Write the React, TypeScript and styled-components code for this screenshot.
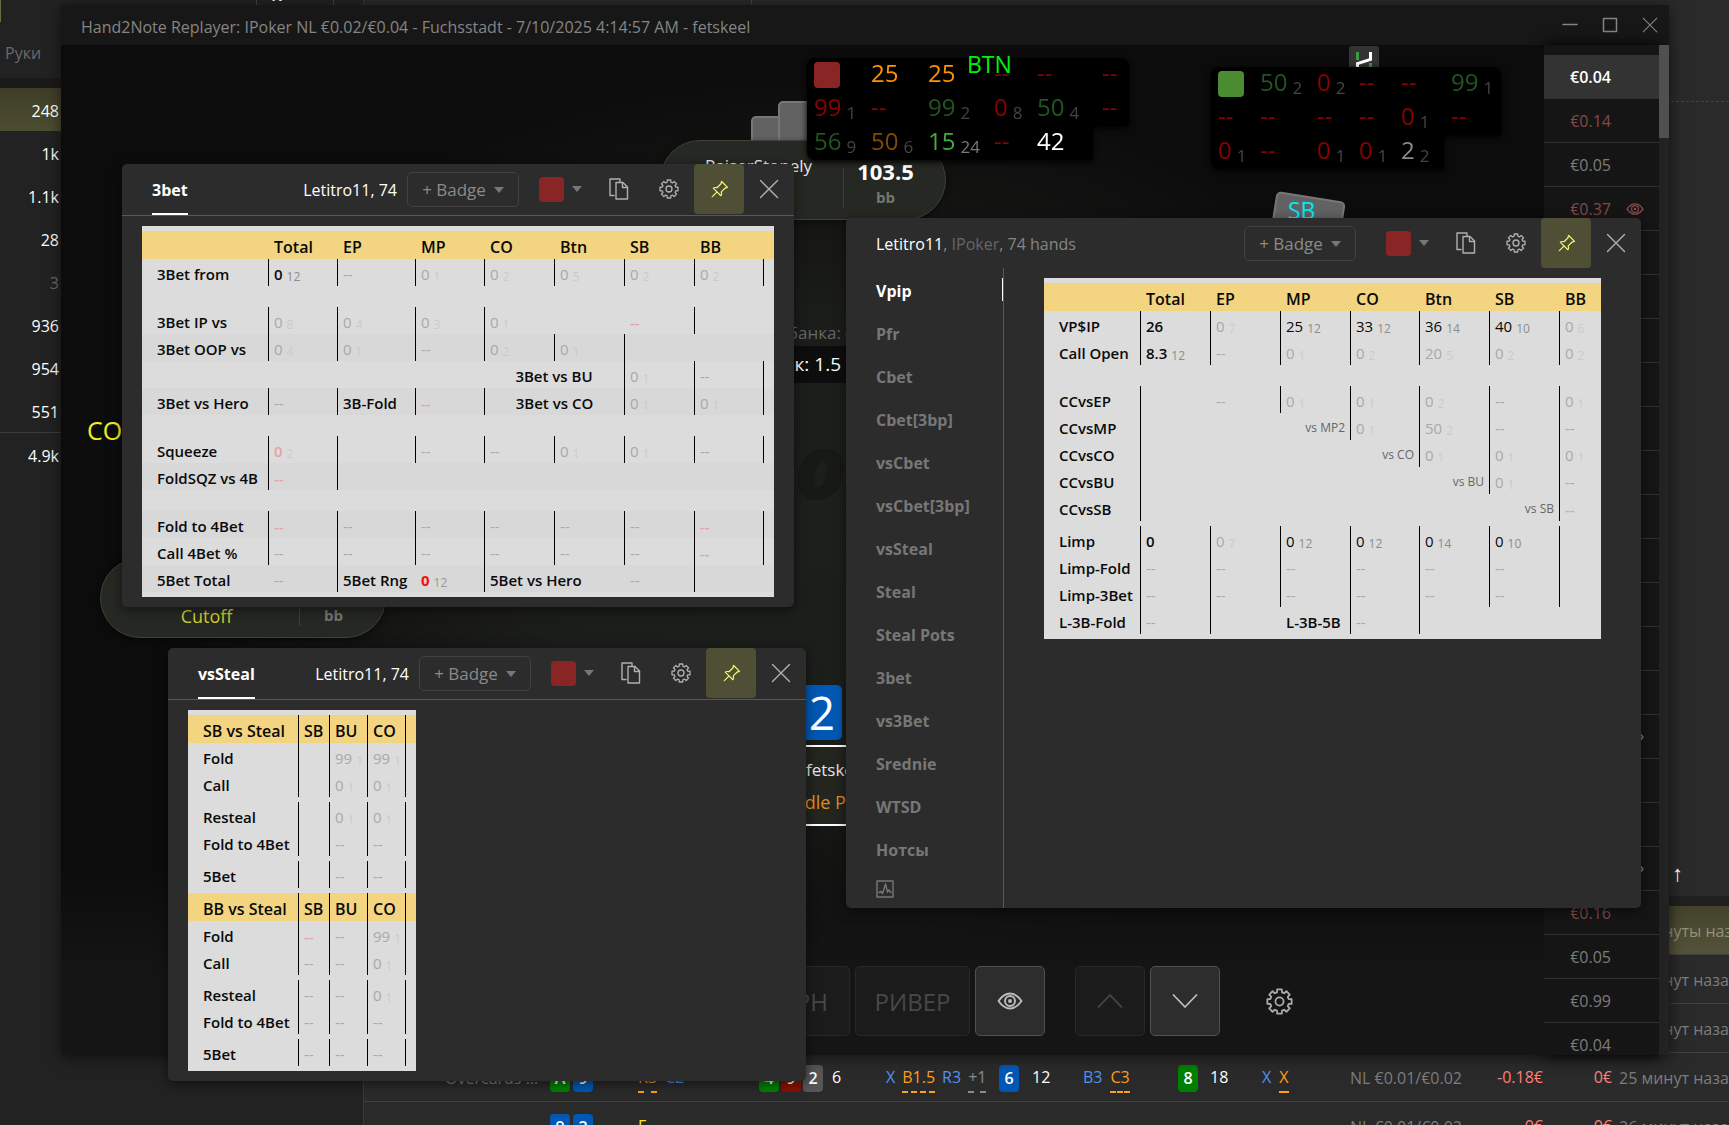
import React from "react";
import styled, { createGlobalStyle, css } from "styled-components";
import { BsPinAngle } from "react-icons/bs";

const GlobalStyle = createGlobalStyle`
  * { box-sizing: border-box; }
  body {
    margin: 0;
    background: #2a2a2a;
    color: #fff;
    font-family: "Open Sans", "Noto Sans", sans-serif;
    font-size: 16px;
    overflow: hidden;
  }
  button { font: inherit; color: inherit; background: none; border: 0; padding: 0; margin: 0; }
  ul { list-style: none; margin: 0; padding: 0; }
  table { border-spacing: 0; border-collapse: separate; table-layout: fixed; }
  td, th { padding: 0; font-weight: 400; text-align: left; }
`;

/* ---------- icons ---------- */

const gearPath = (() => {
  const teeth = 8;
  const pts: string[] = [];
  for (let i = 0; i < teeth; i++) {
    const a = (i * 2 * Math.PI) / teeth - Math.PI / 2;
    const at = (off: number, r: number) =>
      `${(12 + r * Math.cos(a + off)).toFixed(2)} ${(12 + r * Math.sin(a + off)).toFixed(2)}`;
    pts.push(at(-0.27, 8.4), at(-0.19, 11), at(0.19, 11), at(0.27, 8.4));
  }
  return `M${pts.join("L")}Z`;
})();

const Stroke = styled.svg<{ $w?: number }>`
  display: block;
  fill: none;
  stroke: currentColor;
  stroke-width: ${(p) => p.$w ?? 1.5};
  stroke-linejoin: round;
  stroke-linecap: round;
`;

const GearIcon = ({ size = 20 }: { size?: number }) => (
  <Stroke width={size} height={size} viewBox="0 0 24 24" $w={1.6}>
    <path d={gearPath} />
    <circle cx="12" cy="12" r="3.6" />
  </Stroke>
);

const CloseIcon = ({ size = 20 }: { size?: number }) => (
  <Stroke width={size} height={size} viewBox="0 0 20 20" $w={1.4}>
    <path d="M1.5 1.5l17 17M18.5 1.5l-17 17" />
  </Stroke>
);

const CopyIcon = () => (
  <Stroke width="20" height="22" viewBox="0 0 20 22" $w={1.4}>
    <path d="M5 17.5H1V1h10v3" />
    <path d="M7 4.5h7l4.500 4.500V21H7z" />
    <path d="M13.500 4.500V9.500h5" />
  </Stroke>
);

const EyeIcon = ({ size = 26 }: { size?: number }) => (
  <Stroke width={size} height={size} viewBox="0 0 26 26" $w={1.9}>
    <path d="M1.500 13C5 8 9 5.500 13 5.500S21 8 24.500 13C21 18 17 20.500 13 20.500S5 18 1.500 13z" />
    <circle cx="13" cy="13" r="5" />
    <circle cx="13" cy="13" r="1" />
  </Stroke>
);

const ChevronIcon = ({ up }: { up?: boolean }) => (
  <Stroke width="26" height="16" viewBox="0 0 26 16" $w={1.8}>
    <path d={up ? "M1.500 14L13 2l11.500 12" : "M1.500 2L13 14L24.500 2"} />
  </Stroke>
);

const GraphIcon = () => (
  <Stroke width="18" height="18" viewBox="0 0 18 18" $w={1.4}>
    <rect x="1" y="1" width="16" height="16" />
    <path d="M3 12.500l2-1 1.500 2L9.500 4l2 8 1.500-2 2 2.500" />
  </Stroke>
);

const Caret = styled.span`
  width: 0;
  height: 0;
  border: 5px solid transparent;
  border-top: 6px solid #777;
  border-bottom: 0;
`;

/* ---------- desktop and the application behind ---------- */

const Desktop = styled.div`
  position: relative;
  height: 100vh;
  min-height: 720px;
  overflow: hidden;
  background: #2a2a2a;
`;

const BackApp = styled.div`
  display: grid;
  grid-template-columns: 364px 1fr;
  height: 100%;
`;

const Sidebar = styled.aside`
  background: #222;
  border-right: 1px solid #3a3a3a;
`;

const SideHead = styled.div`
  height: 78px;
  padding: 42px 0 0 4px;
  border-left: 1px solid #5c5c3a;
  border-image: linear-gradient(#6b6b45 22px, transparent 22px) 1;
  color: #6a6a6a;
  font-size: 16px;
  line-height: 22px;
`;

const Counts = styled.ul`
  width: 61px;
  padding-top: 10px;
  background: linear-gradient(#1a1a1a 10px, transparent 10px);
`;

const Count = styled.li<{ $active?: boolean; $dim?: boolean; $top?: boolean }>`
  height: 43px;
  padding-right: 2px;
  text-align: right;
  line-height: 46px;
  color: ${(p) => (p.$dim ? "#6a6a6a" : "#fff")};
  background: ${(p) => (p.$active ? "linear-gradient(#3e3d28, #4d4d30)" : "none")};
  ${(p) => p.$top && css`border-top: 1px solid #3c3c3c;`}
`;

const Main = styled.main`
  display: flex;
  flex-direction: column;
  min-width: 0;
  overflow: hidden;
`;

const TopTabs = styled.div`
  flex: 0 0 102px;
  display: flex;
  background: #2a2a2a;
  border-bottom: 1px dashed #444;
`;

const TopTab = styled.div`
  width: 388px;
  border-right: 1px solid #444;
`;

const ChartArea = styled.div`
  flex: 0 0 794px;
  display: flex;
  align-items: flex-end;
  justify-content: flex-end;
  padding: 0 46px 11px 0;
  font-size: 22px;
  line-height: 26px;
`;

const HandTable = styled.table`
  width: 100%;
  border-top: 10px solid #202020;
`;

const HandRow = styled.tr<{ $active?: boolean }>`
  height: 49px;
  background: ${(p) => (p.$active ? "linear-gradient(#43422b, #55543a)" : "#2a2a2a")};
  td {
    padding-top: 2px;
    border-bottom: 1px solid #404040;
    white-space: nowrap;
    overflow: hidden;
    color: ${(p) => (p.$active ? "#92917a" : "#7d7d7d")};
  }
`;

const Line = styled.div<{ $gap?: number; $pad?: number; $end?: boolean }>`
  display: flex;
  align-items: center;
  gap: ${(p) => p.$gap ?? 8}px;
  padding-left: ${(p) => p.$pad ?? 0}px;
  justify-content: ${(p) => (p.$end ? "flex-end" : "flex-start")};
`;

const ink = { blue: "#4f93f5", orange: "#ff9d1e", grey: "#8a8a8a", white: "#fff", red: "#ff8076", yellow: "#f4e628" };

const Act = styled.span<{ $c: keyof typeof ink; $u?: boolean }>`
  height: 30px;
  line-height: 28px;
  color: ${(p) => ink[p.$c]};
  border-bottom: ${(p) => (p.$u ? "2px dashed" : "0")};
`;

const suit = { green: "#008000", blue: "#0058b4", red: "#8b1200", grey: "#565656" };

const MiniCard = styled.span<{ $s: keyof typeof suit }>`
  width: 20px;
  height: 27px;
  border-radius: 4px;
  background: ${(p) => suit[p.$s]};
  color: #fff;
  font-weight: 600;
  line-height: 27px;
  text-align: center;
`;

const ColumnLetter = styled.div`
  position: absolute;
  left: 271px;
  top: -16px;
  font-size: 17px;
  font-weight: 600;
  line-height: 22px;
`;

const TabRules = styled.div`
  position: absolute;
  left: 256px;
  top: 0;
  width: 78px;
  height: 5px;
  border: solid #444;
  border-width: 0 1px;
`;

const handCols = [186, 88, 121, 127, 113, 84, 95, 84, 88, 0, 76, 69, 117];

function HandList() {
  return (
    <HandTable>
      <colgroup>
        {handCols.map((w, i) => (
          <col key={i} width={w || undefined} />
        ))}
      </colgroup>
      <tbody>
        {["22 минуты назад", "23 минут назад", "24 минут назад"].map((t, i) => (
          <HandRow key={t} $active={i === 0}>
            <td colSpan={12} />
            <td><Line $pad={7}>{t}</Line></td>
          </HandRow>
        ))}
        <HandRow>
          <td><Line $pad={81}>Overcards ...</Line></td>
          <td><Line $gap={3}><MiniCard $s="green">A</MiniCard><MiniCard $s="blue">9</MiniCard></Line></td>
          <td><Line><Act $c="orange" $u>R3</Act><Act $c="blue">C2</Act></Line></td>
          <td>
            <Line $gap={2}>
              <MiniCard $s="green">4</MiniCard><MiniCard $s="red">9</MiniCard><MiniCard $s="grey">2</MiniCard>
              <Line $pad={7}><Act $c="white">6</Act></Line>
            </Line>
          </td>
          <td>
            <Line $gap={7}>
              <Act $c="blue">X</Act><Act $c="orange" $u>B1.5</Act><Act $c="blue">R3</Act><Act $c="grey" $u>+1</Act>
            </Line>
          </td>
          <td><Line $gap={13}><MiniCard $s="blue">6</MiniCard><Act $c="white">12</Act></Line></td>
          <td><Line><Act $c="blue">B3</Act><Act $c="orange" $u>C3</Act></Line></td>
          <td><Line $gap={12}><MiniCard $s="green">8</MiniCard><Act $c="white">18</Act></Line></td>
          <td><Line><Act $c="blue">X</Act><Act $c="orange" $u>X</Act></Line></td>
          <td>NL €0.01/€0.02</td>
          <td><Line $end><Act $c="red">-0.18€</Act></Line></td>
          <td><Line $end><Act $c="red">0€</Act></Line></td>
          <td><Line $pad={7}>25 минут назад</Line></td>
        </HandRow>
        <HandRow>
          <td />
          <td><Line $gap={3}><MiniCard $s="blue">9</MiniCard><MiniCard $s="blue">2</MiniCard></Line></td>
          <td><Line><Act $c="yellow">F</Act></Line></td>
          <td colSpan={6} />
          <td>NL €0.01/€0.02</td>
          <td><Line $end><Act $c="red">0€</Act></Line></td>
          <td><Line $end><Act $c="red">0€</Act></Line></td>
          <td><Line $pad={7}>26 минут назад</Line></td>
        </HandRow>
      </tbody>
    </HandTable>
  );
}

/* ---------- replayer window ---------- */

const Replayer = styled.section`
  position: absolute;
  left: 61px;
  right: 60px;
  top: 5px;
  bottom: 70px;
  display: flex;
  flex-direction: column;
  background: #0c0c0c;
  box-shadow: 0 2px 14px rgba(0, 0, 0, 0.55);
`;

const TitleBar = styled.header`
  flex: 0 0 40px;
  display: flex;
  align-items: center;
  justify-content: space-between;
  padding: 0 11px 0 20px;
  background: #171717;
  color: #858585;
`;

const Title = styled.span`
  padding-top: 3px;
`;

const WindowButtons = styled.div`
  display: flex;
  gap: 24px;
  button { width: 16px; height: 16px; display: grid; place-items: center; }
`;

const ReplayBody = styled.div`
  flex: 1;
  display: flex;
  min-height: 0;
`;

const Felt = styled.div`
  position: relative;
  flex: 1;
  display: flex;
  flex-direction: column;
  justify-content: flex-end;
  overflow: hidden;
  background:
    linear-gradient(transparent 820px, #151515 930px),
    radial-gradient(640px 460px at 50% 48%, #1c1f1b 0%, #1b1d1a 45%, #131412 75%, #0c0c0c 100%);
`;

const Spot = styled.div<{ $x: number; $y: number }>`
  position: absolute;
  left: ${(p) => p.$x}px;
  top: ${(p) => p.$y}px;
`;

const SeatLabel = styled(Spot)<{ $c: string; $size?: number }>`
  color: ${(p) => p.$c};
  font-size: ${(p) => p.$size ?? 23}px;
  line-height: 30px;
  white-space: nowrap;
`;

const Seat = styled(Spot)<{ $name: number }>`
  display: grid;
  grid-template-columns: ${(p) => p.$name}px 1fr;
  width: 286px;
  height: 80px;
  padding-top: 10px;
  border: 1px solid #3d423a;
  border-radius: 40px;
  background: #262823;
  text-align: center;
  box-shadow: 0 2px 6px rgba(0, 0, 0, 0.5);
`;

const SeatName = styled.div`
  display: grid;
  grid-template-rows: 30px 26px;
  gap: 4px;
  padding-left: 13px;
  line-height: 30px;
  color: #e8e8e8;
  font-size: 17px;
  em { grid-row: 2; font-style: normal; color: #cfcf2c; font-size: 18px; line-height: 26px; }
`;

const SeatStack = styled.div`
  margin: 17px 0 24px;
  border-left: 1px solid #3d3f3a;
  padding-right: 18px;
  strong { display: block; height: 30px; margin-top: -12px; font-size: 22px; line-height: 30px; }
  small { display: block; font-size: 15px; font-weight: 700; line-height: 22px; color: #75766f; }
`;

const BackCard = styled(Spot)<{ $tilt?: boolean }>`
  width: ${(p) => (p.$tilt ? 70 : 52)}px;
  height: 80px;
  border: 2px solid #777;
  border-radius: 5px;
  background: #626262;
  ${(p) => p.$tilt && css`transform: rotate(9deg);`}
`;

const Watermark = styled(Spot)`
  font-size: 88px;
  line-height: 100px;
  font-weight: 800;
  font-style: italic;
  color: #171916;
`;

const PotSize = styled(Spot)`
  display: grid;
  justify-items: end;
  width: 200px;
  color: #666;
  font-size: 17px;
  line-height: 24px;
  strong {
    margin-top: 1px;
    padding: 0 14px 0 60px;
    background: #0d0d0d;
    color: #fff;
    font-size: 19px;
    font-weight: 400;
    line-height: 37px;
  }
`;

const HeroCard = styled(Spot)`
  width: 50px;
  height: 55px;
  padding-right: 7px;
  border-radius: 5px;
  background: #0058b4;
  font-size: 46px;
  line-height: 54px;
  text-align: right;
`;

const HeroBox = styled(Spot)`
  width: 240px;
  padding: 7px 0 6px 45px;
  border: solid #fff;
  border-width: 2px 0;
  background: #23251f;
  color: #e4e4e4;
  font-size: 17px;
  line-height: 32px;
  em { display: block; margin-left: -33px; font-style: normal; font-size: 18px; color: #e08d1c; }
`;

const Brand = styled(Spot)`
  width: 30px;
  height: 24px;
  border-radius: 3px;
  background: #333;
`;

const hudInk: Record<string, string> = {
  r: "#8b0000", g: "#22551f", G: "#3fae3c", o: "#ff9100", O: "#7f4a05", w: "#fff", d: "#8a8a8a",
};

const Hud = styled(Spot)`
  display: flex;
  flex-direction: column;
  align-items: flex-start;
  filter: drop-shadow(0 2px 3px #000);
`;

const HudRow = styled.div<{ $cols: string; $w: number }>`
  display: grid;
  grid-template-columns: ${(p) => p.$cols};
  width: ${(p) => p.$w}px;
  height: 34px;
  padding-left: 7px;
  background: #000;
  font-size: 24px;
  line-height: 30px;
  &:first-child { border-radius: 8px 8px 0 0; }
  &:last-child { border-radius: 0 0 0 8px; }
`;

const HudStat = styled.span<{ $c: string }>`
  color: ${(p) => hudInk[p.$c]};
  white-space: nowrap;
  small {
    margin-left: 5px;
    font-size: 17px;
    line-height: 1;
    vertical-align: -3px;
    color: ${(p) => (p.$c === "G" ? "#777" : "#444")};
  }
`;

const HudSwatch = styled.span<{ $c: string }>`
  width: 26px;
  height: 26px;
  margin-top: 4px;
  border-radius: 4px;
  background: ${(p) => p.$c};
`;

type Stat = [string, string, string?];

function HudPanel(p: { x: number; y: number; cols: string; widths: number[]; swatch: string; rows: Stat[][] }) {
  return (
    <Hud $x={p.x} $y={p.y}>
      {p.rows.map((row, i) => (
        <HudRow key={i} $cols={p.cols} $w={p.widths[i]}>
          {i === 0 && <HudSwatch $c={p.swatch} />}
          {row.map(([c, v, n], j) => (
            <HudStat key={j} $c={c}>{v}{n && <small>{n}</small>}</HudStat>
          ))}
        </HudRow>
      ))}
    </Hud>
  );
}

const no: Stat = ["r", "--"];

const Controls = styled.div`
  display: flex;
  align-items: center;
  gap: 5px;
  padding: 0 0 19px 686px;
  color: #aaa;
`;

const Control = styled.button<{ $lit?: boolean; $w: number; $push?: boolean }>`
  display: grid;
  place-items: center;
  width: ${(p) => p.$w}px;
  height: 70px;
  margin-left: ${(p) => (p.$push ? 25 : 0)}px;
  border: 1px solid ${(p) => (p.$lit ? "#505050" : "#282828")};
  border-radius: 5px;
  background: ${(p) => (p.$lit ? "#2d2d2d" : "#1b1b1b")};
  color: ${(p) => (p.$lit ? "#bdbdbd" : "#484848")};
  font-size: 24px;
`;

const GearControl = styled.button`
  margin-left: 41px;
`;

const Prices = styled.ul`
  flex: 0 0 115px;
  padding-top: 10px;
  overflow: hidden;
  background: #151515;
  box-shadow: 0 0 14px #000;
`;

const Price = styled.li<{ $tone: "lit" | "red" | "grey" }>`
  display: grid;
  grid-template-columns: 67px 1fr;
  align-items: center;
  gap: 15px;
  height: 44px;
  padding-top: 1px;
  border-bottom: 1px solid #303030;
  text-align: right;
  background: ${(p) => (p.$tone === "lit" ? "#333" : "none")};
  font-weight: ${(p) => (p.$tone === "lit" ? 600 : 400)};
  color: ${(p) => ({ lit: "#fff", red: "#854848", grey: "#7c7c7c" })[p.$tone]};
`;

const Track = styled.div`
  flex: 0 0 10px;
  background: #222;
  &::before { content: ""; display: block; height: 93px; background: #505050; }
`;

const prices: ["lit" | "red" | "grey", string][] = [
  ["lit", "€0.04"], ["red", "€0.14"], ["grey", "€0.05"], ["red", "€0.37"],
  ...Array.from({ length: 15 }, (): ["grey", string] => ["grey", ""]),
  ["red", "€0.16"], ["grey", "€0.05"], ["grey", "€0.99"], ["grey", "€0.04"],
];

const priceEye = new Set([3, 15, 18]);

/* ---------- popups ---------- */

const Popup = styled.section<{ $x: number; $y: number; $w: number; $h: number }>`
  position: absolute;
  left: ${(p) => p.$x}px;
  top: ${(p) => p.$y}px;
  width: ${(p) => p.$w}px;
  min-height: ${(p) => p.$h}px;
  display: flex;
  flex-direction: column;
  overflow: hidden;
  border-radius: 5px;
  background: #2c2c2c;
  box-shadow: 0 3px 12px rgba(0, 0, 0, 0.5);
`;

const PopupHead = styled.header<{ $line?: boolean }>`
  display: flex;
  height: ${(p) => (p.$line ? 52 : 50)}px;
  padding-left: 30px;
  border-bottom: ${(p) => (p.$line ? "1px solid #585858" : "0")};
`;

const Tab = styled.button`
  padding-top: 3px;
  border-bottom: 2px solid #fff;
  font-weight: 700;
`;

const Player = styled.div<{ $start?: boolean }>`
  flex: 1;
  padding-right: 10px;
  line-height: 53px;
  text-align: ${(p) => (p.$start ? "left" : "right")};
  color: ${(p) => (p.$start ? "#858585" : "#fff")};
  b { font-weight: 400; color: #fff; }
  i { font-style: normal; color: #666; }
`;

const BadgeButton = styled.button<{ $apart?: boolean }>`
  display: flex;
  align-items: center;
  justify-content: center;
  gap: 8px;
  width: 112px;
  height: 35px;
  margin: 8px ${(p) => (p.$apart ? 30 : 20)}px 0 0;
  border: 1px solid #414141;
  border-radius: 5px;
  color: #8a8a8a;
  font-size: 17px;
`;

const ColorButton = styled.button`
  display: flex;
  align-items: center;
  gap: 8px;
  height: 50px;
  margin-right: 12px;
  &::before { content: ""; width: 25px; height: 25px; border-radius: 4px; background: #8a2526; }
`;

const ToolButton = styled.button<{ $on?: boolean }>`
  display: grid;
  place-items: center;
  width: 50px;
  height: 50px;
  border-radius: 4px;
  background: ${(p) => (p.$on ? "#4f4f35" : "none")};
  color: ${(p) => (p.$on ? "#f6f66e" : "#b0b0b0")};
`;

const Tools = ({ apart }: { apart?: boolean }) => (
  <>
    <BadgeButton $apart={apart}>+ Badge <Caret /></BadgeButton>
    <ColorButton aria-label="Color"><Caret /></ColorButton>
    <ToolButton aria-label="Copy"><CopyIcon /></ToolButton>
    <ToolButton aria-label="Settings"><GearIcon /></ToolButton>
    <ToolButton aria-label="Pin" $on><BsPinAngle size={19} /></ToolButton>
    <ToolButton aria-label="Close"><CloseIcon /></ToolButton>
  </>
);

const Body = styled.div`
  padding: 10px 20px;
`;

const SideBody = styled.div`
  flex: 1;
  display: grid;
  grid-template-columns: 158px 1fr;
`;

const Nav = styled.nav`
  display: flex;
  flex-direction: column;
  padding-top: 1px;
  border-right: 1px solid #585858;
`;

const NavItem = styled.button<{ $on?: boolean }>`
  position: relative;
  height: 43px;
  padding-left: 30px;
  text-align: left;
  font-weight: 700;
  color: ${(p) => (p.$on ? "#fff" : "#777")};
  &:last-child { height: 36px; }
  ${(p) => p.$on && css`
    &::after { content: ""; position: absolute; right: 0; top: 9px; width: 1px; height: 23px; background: #fff; }
  `}
`;

const SideContent = styled.div`
  padding: 10px 40px;
`;

/* ---------- stat tables ---------- */

const Stats = styled.table`
  width: 100%;
  border: solid #dcdcdc;
  border-width: 5px 0;
  background: #dcdcdc;
  color: #0a0a0a;
`;

const StatHead = styled.tr`
  height: 28px;
  background: #f3d480;
`;

const StatRow = styled.tr<{ $shade?: boolean }>`
  height: 27px;
  background: ${(p) => (p.$shade ? "#d8d8d8" : "none")};
`;

const Gap = styled.tr<{ $h: number }>`
  height: ${(p) => p.$h}px;
`;

const tones: Record<string, [string, string, number]> = {
  f: ["#a9a9a9", "#cbcbcb", 400],
  r: ["#e5a3a3", "#cbcbcb", 600],
  R: ["#f01212", "#999", 700],
  b: ["#0a0a0a", "#8c8c8c", 600],
  k: ["#0a0a0a", "#8c8c8c", 400],
  n: ["#666", "#666", 400],
  l: ["#0a0a0a", "#8c8c8c", 600],
};

const cellBase = css<{ $line?: boolean; $tone?: string; $align?: string; $label?: boolean }>`
  padding: 3px 0 0 ${(p) => (p.$label ? 15 : p.$line ? 5 : 6)}px;
  ${(p) => p.$align === "right" && "padding: 3px 5px 0 0;"}
  ${(p) => p.$align === "center" && "padding-left: 0;"}
  border-left: ${(p) => (p.$line ? "1px solid #000" : "0")};
  text-align: ${(p) => p.$align ?? "left"};
  white-space: nowrap;
  line-height: 20px;
  font-size: ${(p) => (p.$tone === "n" ? 12 : 15)}px;
  font-weight: ${(p) => tones[p.$tone ?? "l"][2]};
  color: ${(p) => tones[p.$tone ?? "l"][0]};
  small {
    margin-left: 4px;
    font-size: 12px;
    font-weight: 400;
    vertical-align: -1px;
    line-height: 1;
    color: ${(p) => tones[p.$tone ?? "l"][1]};
  }
`;

const Cell = styled.td`${cellBase}`;
const RowName = styled.th`${cellBase}`;

const HeadCell = styled.th<{ $line?: boolean; $label?: boolean }>`
  padding: 3px 0 0 ${(p) => (p.$label ? 15 : p.$line ? 5 : 6)}px;
  border-left: ${(p) => (p.$line ? "1px solid #000" : "0")};
  font-size: 16px;
  font-weight: 600;
  line-height: 22px;
  white-space: nowrap;
`;

type C = { t?: string; n?: string; tone?: string; line: boolean; span: number; align?: string };
type Row = { head?: string[]; ruled?: boolean; gap?: number; name?: string; shade?: boolean; cells?: C[] };

/* "|" starts a ruled cell, "." one without a rule; then tone:value:count:span:align */
const cells = (src: string): C[] =>
  src.split(/ +/).map((s) => {
    const [tone, t, n, span, align] = s.slice(1).split(":");
    return {
      line: s[0] === "|",
      tone: tone || "f",
      t: (t ?? "").replace(/_/g, " "),
      n: n || undefined,
      span: Number(span || 1),
      align: align === "r" ? "right" : align === "c" ? "center" : undefined,
    };
  });

const row = (name: string, src: string, shade = false): Row => ({ name, shade, cells: cells(src) });

function StatTable({ cols, rows }: { cols: number[]; rows: Row[] }) {
  return (
    <Stats>
      <colgroup>
        {cols.map((w, i) => (
          <col key={i} width={w || undefined} />
        ))}
      </colgroup>
      <tbody>
        {rows.map((r, i) => {
          if (r.gap) return <Gap key={i} $h={r.gap}><td colSpan={cols.length} /></Gap>;
          if (r.head)
            return (
              <StatHead key={i}>
                {r.head.map((h, j) => (
                  <HeadCell key={j} scope="col" $label={j === 0} $line={j > 0 && r.ruled}>{h}</HeadCell>
                ))}
              </StatHead>
            );
          return (
            <StatRow key={i} $shade={r.shade}>
              <RowName scope="row" $label>{r.name}</RowName>
              {r.cells!.map((c, j) => (
                <Cell key={j} colSpan={c.span} $line={c.line} $tone={c.tone} $align={c.align}>
                  {c.t}{c.n && <small>{c.n}</small>}
                </Cell>
              ))}
            </StatRow>
          );
        })}
      </tbody>
    </Stats>
  );
}

const threeBet: Row[] = [
  { head: ["", "Total", "EP", "MP", "CO", "Btn", "SB", "BB", ""] },
  row("3Bet from", "|b:0:12 |f:-- |f:0:1 |f:0:2 |f:0:5 |f:0:2 |f:0:2 |"),
  { gap: 21 },
  row("3Bet IP vs", "|f:0:8 |f:0:4 |f:0:3 |f:0:1 . .r:-- | ."),
  row("3Bet OOP vs", "|f:0:4 |f:0:1 |f:-- |f:0:2 |f:0:1 |:::3", true),
  row("", ".:::3 .l:3Bet_vs_BU::2:c |f:0:1 |f:-- |"),
  row("3Bet vs Hero", "|f:-- |l:3B-Fold |r:-- |l:3Bet_vs_CO::2:c |f:0:1 |f:0:1 |", true),
  { gap: 21 },
  row("Squeeze", "|r:0:2 | |f:-- |f:-- |f:0:1 |f:0:1 |f:-- |"),
  row("FoldSQZ vs 4B", "|r:-- |:::7", true),
  { gap: 21 },
  row("Fold to 4Bet", "|r:-- |f:-- |f:-- |f:-- |f:-- |f:-- |r:-- |", true),
  row("Call 4Bet %", "|f:-- |f:-- |f:-- |f:-- |f:-- |f:-- |r:-- |"),
  row("5Bet Total", ".f:-- |l:5Bet_Rng .R:0:12 |l:5Bet_vs_Hero::2 .f:-- | .", true),
];

const vpip: Row[] = [
  { head: ["", "Total", "EP", "MP", "CO", "Btn", "SB", "BB"] },
  row("VP$IP", "|b:26 |f:0:7 |k:25:12 |k:33:12 |k:36:14 |k:40:10 |f:0:6"),
  row("Call Open", "|b:8.3:12 |f:-- |f:0:1 |f:0:2 |f:20:5 |f:0:2 |f:0:2"),
  { gap: 21 },
  row("CCvsEP", "| .f:-- |f:0:1 |f:0:1 |f:0:2 |f:-- |f:0:1"),
  row("CCvsMP", "| .n:vs_MP2::2:r |f:0:1 |f:50:2 |f:-- |f:--"),
  row("CCvsCO", "| .n:vs_CO::3:r |f:0:1 |f:0:1 |f:0:1"),
  row("CCvsBU", "| .n:vs_BU::4:r |f:0:1 |f:--"),
  row("CCvsSB", "| .n:vs_SB::5:r |r:--"),
  { gap: 5 },
  row("Limp", "|b:0 |f:0:7 |k:0:12 |k:0:12 |k:0:14 |k:0:10 |"),
  row("Limp-Fold", "|f:-- |f:-- |f:-- |f:-- |f:-- |f:-- |"),
  row("Limp-3Bet", "|f:-- |f:-- |f:-- |f:-- |f:-- |f:-- |"),
  row("L-3B-Fold", "|f:-- | .l:L-3B-5B |f:-- | . ."),
];

const vsSteal: Row[] = [
  { head: ["SB vs Steal", "SB", "BU", "CO", ""], ruled: true },
  row("Fold", "| |f:99:1 |f:99:1 |"),
  row("Call", "| |f:0:1 |f:0:1 |"),
  { gap: 5 },
  row("Resteal", "| |f:0:1 |f:0:1 |"),
  row("Fold to 4Bet", "| |f:-- |f:-- |"),
  { gap: 5 },
  row("5Bet", "| |f:-- |f:-- |"),
  { gap: 5 },
  { head: ["BB vs Steal", "SB", "BU", "CO", ""], ruled: true },
  row("Fold", "|r:-- |f:-- |f:99:1 |"),
  row("Call", "|f:-- |f:-- |f:0:1 |"),
  { gap: 5 },
  row("Resteal", "|f:-- |f:-- |f:0:1 |"),
  row("Fold to 4Bet", "|f:-- |f:-- |f:-- |"),
  { gap: 5 },
  row("5Bet", "|f:-- |f:-- |f:-- |"),
];

const StealBox = styled.div`
  width: 228px;
`;

const navItems = [
  "Vpip", "Pfr", "Cbet", "Cbet[3bp]", "vsCbet", "vsCbet[3bp]", "vsSteal",
  "Steal", "Steal Pots", "3bet", "vs3Bet", "Srednie", "WTSD", "Нотсы",
];

/* ---------- page ---------- */

export default function App() {
  return (
    <Desktop>
      <GlobalStyle />
      <BackApp>
        <Sidebar>
          <SideHead>Руки</SideHead>
          <Counts>
            <Count $active>248</Count>
            <Count>1k</Count>
            <Count>1.1k</Count>
            <Count>28</Count>
            <Count $dim>3</Count>
            <Count>936</Count>
            <Count>954</Count>
            <Count>551</Count>
            <Count $top>4.9k</Count>
          </Counts>
        </Sidebar>
        <Main>
          <TopTabs><TopTab /></TopTabs>
          <ChartArea>↑</ChartArea>
          <HandList />
        </Main>
      </BackApp>
      <TabRules />
      <ColumnLetter>К</ColumnLetter>

      <Replayer>
        <TitleBar>
          <Title>Hand2Note Replayer: IPoker NL €0.02/€0.04 - Fuchsstadt - 7/10/2025 4:14:57 AM - fetskeel</Title>
          <WindowButtons>
            <button aria-label="Minimize"><Stroke width="16" height="16" viewBox="0 0 16 16"><path d="M1 7.500h14" /></Stroke></button>
            <button aria-label="Maximize"><Stroke width="16" height="16" viewBox="0 0 16 16"><path d="M1.500 1.500h13v13h-13z" /></Stroke></button>
            <button aria-label="Close"><CloseIcon size={16} /></button>
          </WindowButtons>
        </TitleBar>
        <ReplayBody>
          <Felt>
            <Watermark $x={733} $y={370}>o</Watermark>
            <BackCard $x={690} $y={71} />
            <BackCard $x={717} $y={56} />
            <BackCard $x={1209} $y={151} $tilt />
            <Seat $x={599} $y={95} $name={182}>
              <SeatName>RaiserStonely</SeatName>
              <SeatStack><strong>103.5</strong><small>bb</small></SeatStack>
            </Seat>
            <Seat $x={39} $y={513} $name={198}>
              <SeatName><em>Cutoff</em></SeatName>
              <SeatStack><strong /><small>bb</small></SeatStack>
            </Seat>
            <PotSize $x={594} $y={276}>
              <span>Размер банка: 4</span>
              <strong>Банк: 1.5</strong>
            </PotSize>
            <HeroCard $x={731} $y={640}>2</HeroCard>
            <HeroBox $x={700} $y={700}>fetskeel<em>Middle Position</em></HeroBox>
            <Brand $x={1288} $y={1}>
              <svg width="30" height="24" viewBox="0 0 30 24" fill="none" strokeWidth="3">
                <path d="M8.500 6v8M21.500 17v7" stroke="#3f9a45" />
                <path d="M21.500 6v7.500L8.500 17.500V24" stroke="#fff" />
              </svg>
            </Brand>
            <HudPanel
              x={746} y={13} cols="57px 57px 66px 43px 65px 1fr" widths={[322, 322, 286]} swatch="#8a2526"
              rows={[
                [["o", "25"], ["o", "25"], no, no, no],
                [["r", "99", "1"], no, ["g", "99", "2"], ["r", "0", "8"], ["g", "50", "4"], no],
                [["g", "56", "9"], ["O", "50", "6"], ["G", "15", "24"], no, ["w", "42"]],
              ]}
            />
            <HudPanel
              x={1150} y={22} cols="42px 57px 42px 42px 50px 1fr" widths={[290, 290, 233]} swatch="#4b8c32"
              rows={[
                [["g", "50", "2"], ["r", "0", "2"], no, no, ["g", "99", "1"]],
                [no, no, no, no, ["r", "0", "1"], no],
                [["r", "0", "1"], no, ["r", "0", "1"], ["r", "0", "1"], ["d", "2", "2"]],
              ]}
            />
            <SeatLabel $x={906} $y={4} $c="#00f010">BTN</SeatLabel>
            <SeatLabel $x={1227} $y={150} $c="#00eaf5">SB</SeatLabel>
            <SeatLabel $x={26} $y={370} $c="#eeee22" $size={25}>CO</SeatLabel>
            <Controls>
              <Control $w={103}>ТЕРН</Control>
              <Control $w={115}>РИВЕР</Control>
              <Control $w={70} $lit aria-label="Show cards"><EyeIcon /></Control>
              <Control $w={70} $push aria-label="Previous hand"><ChevronIcon up /></Control>
              <Control $w={70} $lit aria-label="Next hand"><ChevronIcon /></Control>
              <GearControl aria-label="Replayer settings"><GearIcon size={27} /></GearControl>
            </Controls>
          </Felt>
          <Prices>
            {prices.map(([tone, v], i) => (
              <Price key={i} $tone={tone}>
                <span>{v}</span>
                {priceEye.has(i) && <EyeIcon size={18} />}
              </Price>
            ))}
          </Prices>
          <Track />
        </ReplayBody>
      </Replayer>

      <Popup $x={122} $y={164} $w={672} $h={443}>
        <PopupHead $line>
          <Tab>3bet</Tab>
          <Player>Letitro11, 74</Player>
          <Tools />
        </PopupHead>
        <Body>
          <StatTable cols={[126, 69, 78, 69, 70, 70, 70, 69, 0]} rows={threeBet} />
        </Body>
      </Popup>

      <Popup $x={168} $y={648} $w={638} $h={433}>
        <PopupHead $line>
          <Tab>vsSteal</Tab>
          <Player>Letitro11, 74</Player>
          <Tools />
        </PopupHead>
        <Body>
          <StealBox>
            <StatTable cols={[110, 31, 38, 38, 0]} rows={vsSteal} />
          </StealBox>
        </Body>
      </Popup>

      <Popup $x={846} $y={218} $w={795} $h={690}>
        <PopupHead>
          <Player $start><b>Letitro11</b>, <i>IPoker</i>, 74 hands</Player>
          <Tools apart />
        </PopupHead>
        <SideBody>
          <Nav>
            {navItems.map((n, i) => (
              <NavItem key={n} $on={i === 0}>{n}</NavItem>
            ))}
            <NavItem aria-label="Graph"><GraphIcon /></NavItem>
          </Nav>
          <SideContent>
            <StatTable cols={[96, 70, 70, 70, 69, 70, 70, 0]} rows={vpip} />
          </SideContent>
        </SideBody>
      </Popup>
    </Desktop>
  );
}
